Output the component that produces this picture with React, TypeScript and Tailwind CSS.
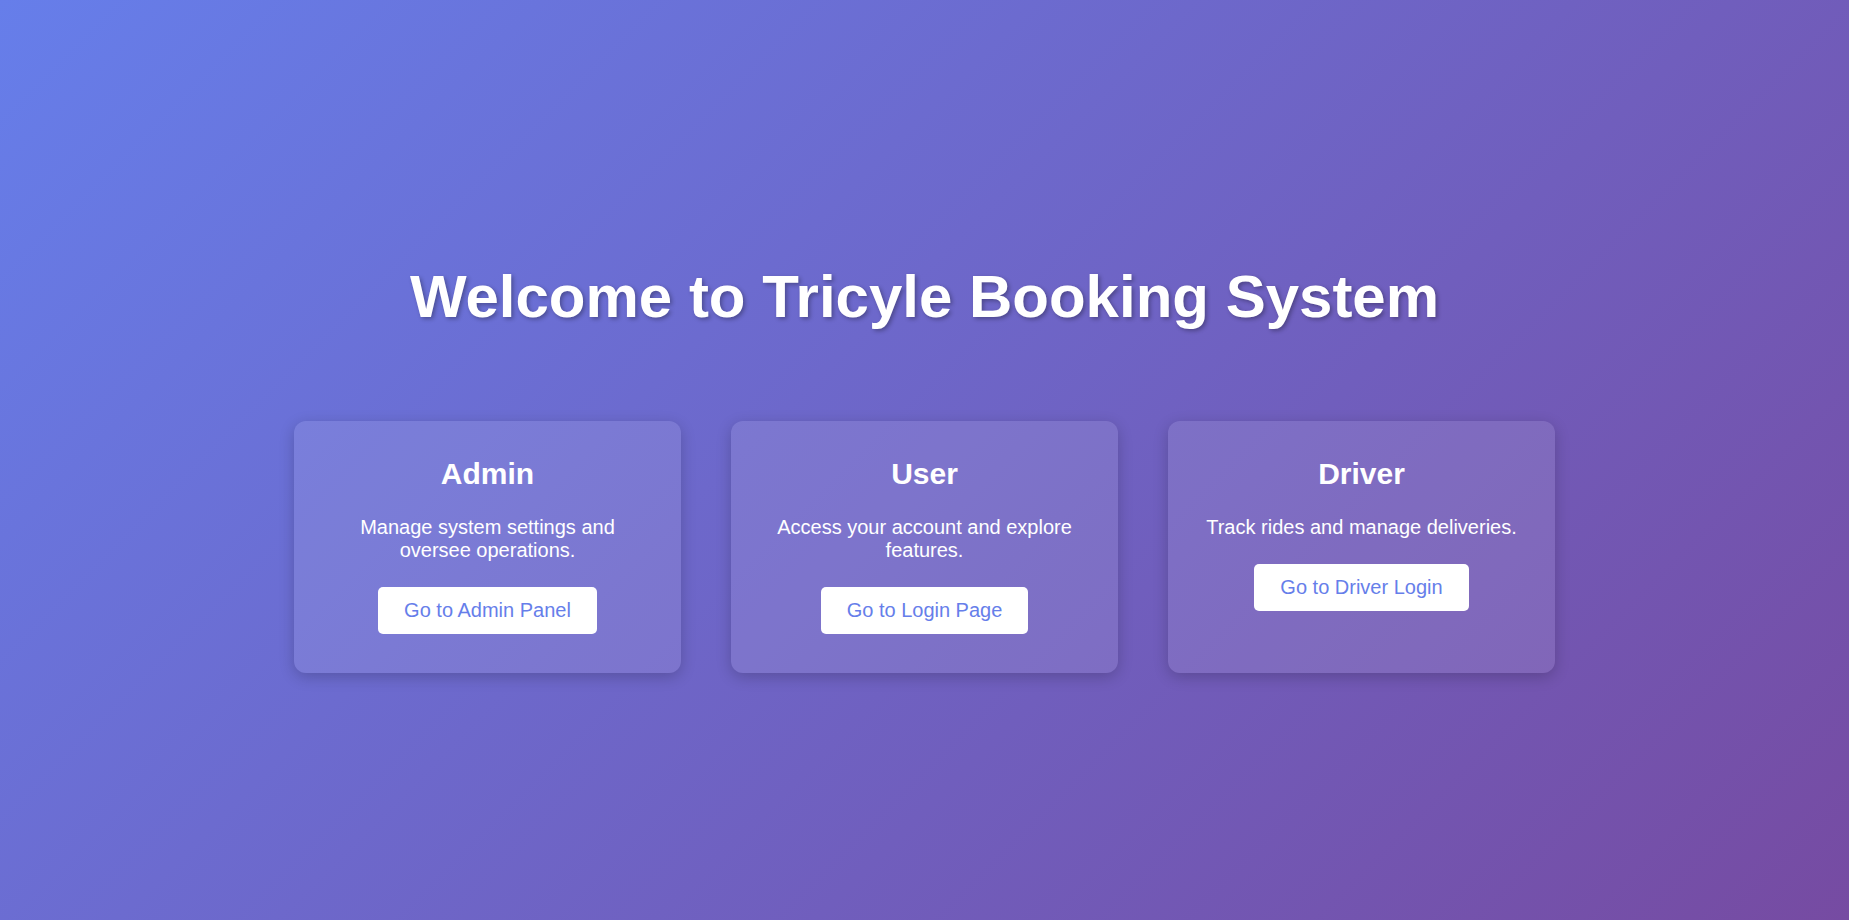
import React from 'react';

interface Role {
  title: string;
  description: string;
  action: string;
}

const roles: Role[] = [
  { title: 'Admin', description: 'Manage system settings and oversee operations.', action: 'Go to Admin Panel' },
  { title: 'User', description: 'Access your account and explore features.', action: 'Go to Login Page' },
  { title: 'Driver', description: 'Track rides and manage deliveries.', action: 'Go to Driver Login' },
];

const RoleCard: React.FC<{ role: Role }> = ({ role }) => (
  <div className="w-[387px] bg-white/10 rounded-xl shadow-[0_4px_15px_rgba(0,0,0,0.2)] pt-[36px] pb-[39px] px-[30px] flex flex-col items-center text-center">
    <h2 className="text-[30px] font-bold leading-[1.15] mb-[24px]">{role.title}</h2>
    <p className="text-[20px] leading-[1.15] mb-[25px]">{role.description}</p>
    <button className="bg-white text-[#667eea] text-[20px] leading-[1.15] px-[26px] py-[12px] rounded-[5px]">
      {role.action}
    </button>
  </div>
);

export default function App() {
  return (
    <div
      className="min-h-screen w-full flex flex-col items-center justify-center bg-[linear-gradient(135deg,#667eea_0%,#764ba2_100%)] text-white"
      style={{ fontFamily: '"Liberation Sans", Arial, sans-serif' }}
    >
      <h1 className="text-[60px] font-bold leading-[1.15] mt-[15px] mb-[90px] [text-shadow:2px_2px_4px_rgba(0,0,0,0.3)]">
        Welcome to Tricyle Booking System
      </h1>
      <div className="flex items-stretch gap-[50px]">
        {roles.map(role => (
          <RoleCard key={role.title} role={role} />
        ))}
      </div>
    </div>
  );
}
